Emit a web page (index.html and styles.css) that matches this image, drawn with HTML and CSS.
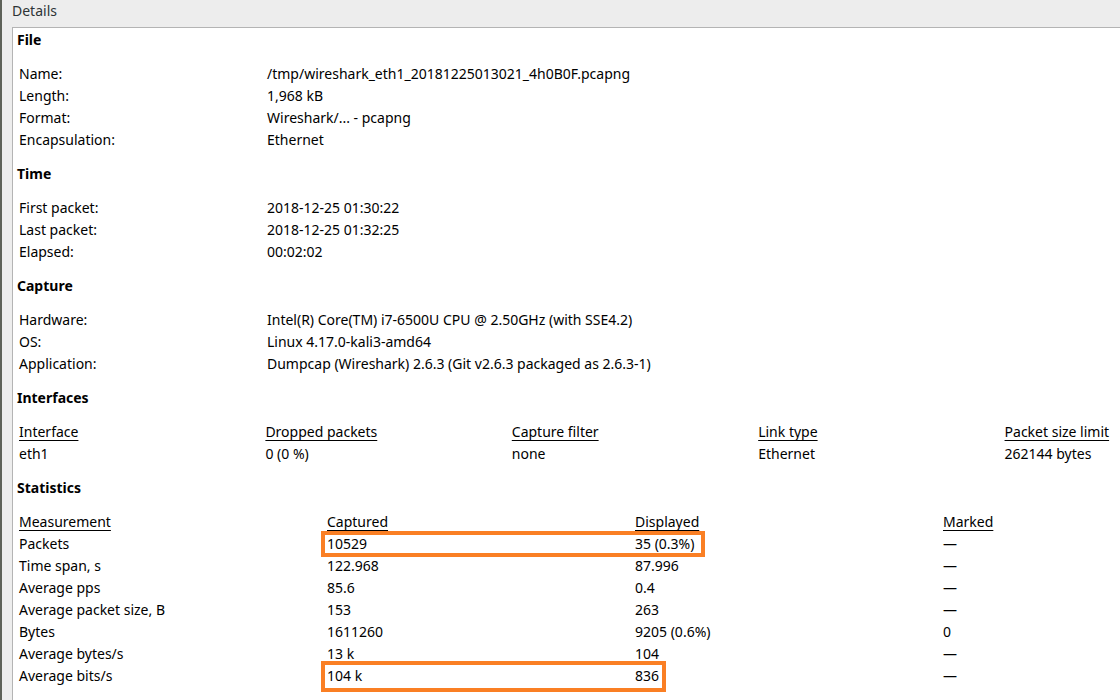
FILE: index.html
```html
<!DOCTYPE html>
<html>
<head>
<meta charset="utf-8">
<link rel="stylesheet" href="styles.css">
</head>
<body>
<div class="window">
  <div class="title">Details</div>
  <div class="pane">
    <section class="sec">
      <h3>File</h3>
      <div class="kv">
        <span>Name:</span><span>/tmp/wireshark_eth1_20181225013021_4h0B0F.pcapng</span>
        <span>Length:</span><span>1,968 kB</span>
        <span>Format:</span><span>Wireshark/... - pcapng</span>
        <span>Encapsulation:</span><span>Ethernet</span>
      </div>
    </section>
    <section class="sec">
      <h3>Time</h3>
      <div class="kv">
        <span>First packet:</span><span>2018-12-25 01:30:22</span>
        <span>Last packet:</span><span>2018-12-25 01:32:25</span>
        <span>Elapsed:</span><span>00:02:02</span>
      </div>
    </section>
    <section class="sec">
      <h3>Capture</h3>
      <div class="kv">
        <span>Hardware:</span><span>Intel(R) Core(TM) i7-6500U CPU @ 2.50GHz (with SSE4.2)</span>
        <span>OS:</span><span>Linux 4.17.0-kali3-amd64</span>
        <span>Application:</span><span>Dumpcap (Wireshark) 2.6.3 (Git v2.6.3 packaged as 2.6.3-1)</span>
      </div>
    </section>
    <section class="sec">
      <h3>Interfaces</h3>
      <div class="cols5">
        <span class="th">Interface</span><span class="th">Dropped packets</span><span class="th">Capture filter</span><span class="th">Link type</span><span class="th">Packet size limit</span>
        <span>eth1</span><span>0 (0 %)</span><span>none</span><span>Ethernet</span><span>262144 bytes</span>
      </div>
    </section>
    <section class="sec stats">
      <h3>Statistics</h3>
      <div class="cols4">
        <span class="th">Measurement</span><span class="th">Captured</span><span class="th">Displayed</span><span class="th">Marked</span>
        <span>Packets</span><span>10529</span><span>35 (0.3%)</span><span>—</span>
        <span>Time span, s</span><span>122.968</span><span>87.996</span><span>—</span>
        <span>Average pps</span><span>85.6</span><span>0.4</span><span>—</span>
        <span>Average packet size, B</span><span>153</span><span>263</span><span>—</span>
        <span>Bytes</span><span>1611260</span><span>9205 (0.6%)</span><span>0</span>
        <span>Average bytes/s</span><span>13 k</span><span>104</span><span>—</span>
        <span>Average bits/s</span><span>104 k</span><span>836</span><span>—</span>
      </div>
      <div class="mark mark-packets"></div>
      <div class="mark mark-bits"></div>
    </section>
  </div>
</div>
</body>
</html>
```
FILE: styles.css
```css
html, body {
  margin: 0;
  padding: 0;
  height: 100%;
  overflow: hidden;
}
body {
  background: #ededed;
  font-family: "Noto Sans", "DejaVu Sans", sans-serif;
  font-size: 14px;
  color: #1a1a1a;
}
.window {
  height: 700px;
  border-left: 2px solid #5e6259;
  padding-left: 10px;
  box-sizing: border-box;
}
.title {
  height: 27px;
  line-height: 22px;
  color: #2e3436;
}
.pane {
  position: relative;
  background: #fff;
  border: 1px solid #b4b4b4;
  border-right: none;
  width: 1260px;
  height: 700px;
  padding: 1px 0 0 4px;
  box-sizing: border-box;
}
.sec {
  margin-bottom: 12px;
}
.sec h3 {
  margin: 0 0 12px 0;
  font-size: 14px;
  font-weight: bold;
  line-height: 22px;
  color: #000;
}
.kv, .cols5, .cols4 {
  display: grid;
  padding-left: 2px;
  line-height: 22px;
  color: #000;
}
.kv {
  grid-template-columns: 248px auto;
}
.cols5 {
  grid-template-columns: repeat(5, 246.4px);
}
.cols4 {
  grid-template-columns: repeat(4, 308px);
}
.th {
  text-decoration: underline;
  text-underline-offset: 3px;
}
.stats {
  position: relative;
}
.mark {
  position: absolute;
  border: 4px solid #fa7f24;
  box-sizing: border-box;
}
.mark-packets {
  left: 304px;
  top: 54px;
  width: 384px;
  height: 26px;
}
.mark-bits {
  left: 304px;
  top: 184px;
  width: 345px;
  height: 31px;
}
```
